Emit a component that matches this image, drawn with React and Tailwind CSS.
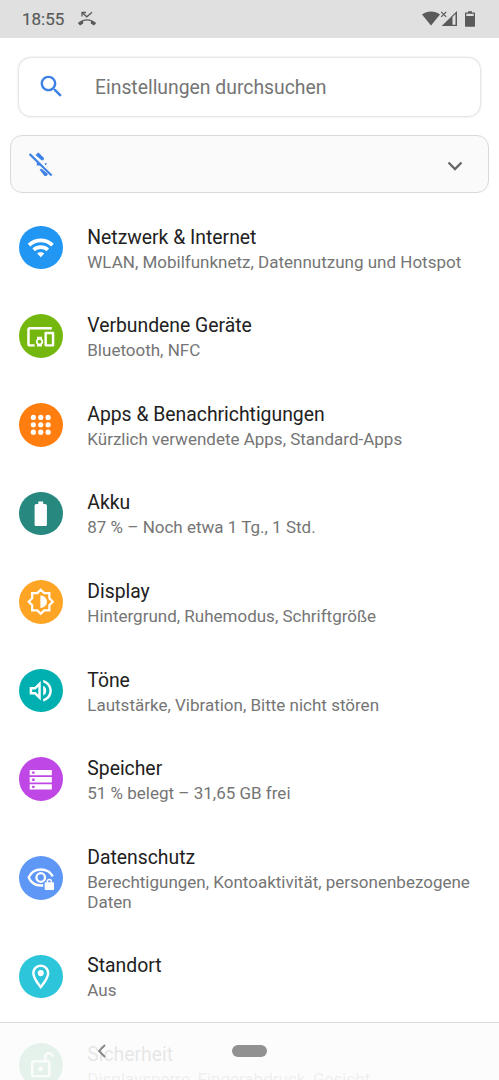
const ICONS = {
  wifi: (
    <path d="M1.4 8.800l2.100 2.200c4.700-4.700 12.300-4.700 17 0l2.100-2.200C16.700 3.100 7.300 3.100 1.400 8.800zM9.100 16.700l2.900 3L14.900 16.700c-1.600-1.500-4.200-1.500-5.800 0zM5.200 12.700l2.100 2.200c2.600-2.500 6.800-2.500 9.400 0l2.100-2.200c-3.700-3.600-9.900-3.600-13.600 0z" />
  ),
  devices: (
    <path d="M3 6h18V4H3c-1.100 0-2 .9-2 2v12c0 1.100.9 2 2 2h4v-2H3V6zm10 6H9v1.780c-.61.55-1 1.330-1 2.220s.39 1.670 1 2.220V20h4v-1.780c.61-.55 1-1.340 1-2.220s-.39-1.670-1-2.220V12zm-2 5.500c-.83 0-1.500-.67-1.500-1.500s.67-1.500 1.500-1.500 1.500.67 1.500 1.500-.67 1.500-1.500 1.500zM22 8h-6c-.5 0-1 .5-1 1v10c0 .5.5 1 1 1h6c.5 0 1-.5 1-1V9c0-.5-.5-1-1-1zm-1 10h-4v-8h4v8z" />
  ),
  apps: (
    <>
      {[6, 12, 18].map((y) =>
        [6, 12, 18].map((x) => <circle key={x + "-" + y} cx={x} cy={y} r="2.1" />)
      )}
    </>
  ),
  battery: (
    <path d="M15.670 4H14V2h-4v2H8.330C7.600 4 7 4.600 7 5.330v15.330C7 21.400 7.600 22 8.330 22h7.330c.74 0 1.340-.6 1.340-1.330V5.330C17 4.600 16.400 4 15.670 4z" />
  ),
  display: (
    <>
      <path
        d="M12 2.200L14.800 5H19v4.200L21.800 12 19 14.800V19h-4.200L12 21.800 9.200 19H5v-4.200L2.200 12 5 9.200V5h4.200z"
        fill="none"
        stroke="currentColor"
        strokeWidth="1.800"
      />
      <path d="M11.700 7v10c3 0 5.300-2.240 5.300-5s-2.300-5-5.300-5z" />
    </>
  ),
  sound: (
    <path d="M3 9v6h4l5 5V4L7 9H3zm7-.17v6.340L7.830 13H5v-2h2.830L10 8.830zM16.500 12c0-1.770-1.020-3.290-2.500-4.030v8.050c1.480-.73 2.500-2.250 2.500-4.020zM14 3.230v2.060c2.890.86 5 3.540 5 6.710s-2.110 5.850-5 6.710v2.060c4.010-.91 7-4.490 7-8.770s-2.990-7.860-7-8.770z" />
  ),
  storage: (
    <path
      fillRule="evenodd"
      d="M3 4h18v4.400H3zM3 9.800h18v4.400H3zM3 15.600h18V20H3zM5 5.200v2h2v-2zM5 11v2h2v-2zM5 16.800v2h2v-2z"
    />
  ),
  privacy: (
    <>
      <path
        d="M21.800 10.900C20 7.500 16.300 5.300 12 5.300S4 7.800 2.200 11.800C4 15.800 7.700 18.300 12 18.300c.7 0 1.400-.1 2-.2"
        fill="none"
        stroke="currentColor"
        strokeWidth="1.900"
      />
      <circle cx="12" cy="11.800" r="3.500" fill="none" stroke="currentColor" strokeWidth="1.900" />
      <path
        fillRule="evenodd"
        d="M21.200 16v-.7a2.200 2.200 0 0 0-4.400 0v.7h-.8c-.4 0-.8.4-.8.800v4.600c0 .4.400.8.8.8h6c.4 0 .8-.4.800-.8v-4.600c0-.4-.4-.8-.8-.8zm-1.200 0h-2v-.7a1 1 0 0 1 2 0z"
        transform="translate(0 -.3)"
      />
    </>
  ),
  location: (
    <>
      <path d="M12 2C8.130 2 5 5.130 5 9c0 5.250 7 13 7 13s7-7.750 7-13c0-3.870-3.130-7-7-7zM7 9c0-2.760 2.240-5 5-5s5 2.240 5 5c0 2.880-2.880 7.190-5 9.880C9.920 16.210 7 11.850 7 9z" />
      <circle cx="12" cy="9" r="2.500" />
    </>
  ),
  security: (
    <>
      <rect x="5" y="9.300" width="14" height="12" rx="1" fill="none" stroke="currentColor" strokeWidth="1.900" />
      <path d="M15.700 9V5.600a3 3 0 0 1 6 0" fill="none" stroke="currentColor" strokeWidth="1.900" />
      <circle cx="12" cy="15.300" r="1.900" />
    </>
  ),
};

const ITEMS = [
  { icon: "wifi", color: "bg-[#2196f3]", title: "Netzwerk & Internet", lines: ["WLAN, Mobilfunknetz, Datennutzung und Hotspot"] },
  { icon: "devices", color: "bg-[#74b80f]", title: "Verbundene Geräte", lines: ["Bluetooth, NFC"] },
  { icon: "apps", color: "bg-[#ff7e0f]", title: "Apps & Benachrichtigungen", lines: ["Kürzlich verwendete Apps, Standard-Apps"] },
  { icon: "battery", color: "bg-[#26887f]", title: "Akku", lines: ["87 % – Noch etwa 1 Tg., 1 Std."] },
  { icon: "display", color: "bg-[#ffa526]", title: "Display", lines: ["Hintergrund, Ruhemodus, Schriftgröße"] },
  { icon: "sound", color: "bg-[#00b0b0]", title: "Töne", lines: ["Lautstärke, Vibration, Bitte nicht stören"] },
  { icon: "storage", color: "bg-[#bf47e6]", title: "Speicher", lines: ["51 % belegt – 31,65 GB frei"] },
  { icon: "privacy", color: "bg-[#5e97f6]", title: "Datenschutz", lines: ["Berechtigungen, Kontoaktivität, personenbezogene", "Daten"] },
  { icon: "location", color: "bg-[#2cc5da]", title: "Standort", lines: ["Aus"] },
  { icon: "security", color: "bg-[#0f9d58]", title: "Sicherheit", lines: ["Displaysperre, Fingerabdruck, Gesicht"] },
];

function Item({ icon, color, title, lines }) {
  return (
    <li className="flex shrink-0 items-center py-[20.3px] pl-[19.200px]">
      <span className={`flex size-[43.600px] shrink-0 items-center justify-center rounded-full text-white ${color}`}>
        <svg viewBox="0 0 24 24" className="size-[29.500px]" fill="currentColor">
          {ICONS[icon]}
        </svg>
      </span>
      <div className="ml-[24.500px] whitespace-nowrap">
        <h2 className="text-[19.350px] leading-7 text-[#212121]">{title}</h2>
        {lines.map((line) => (
          <p key={line} className="text-[17px] leading-5 text-[#757575]">{line}</p>
        ))}
      </div>
    </li>
  );
}

function StatusBar() {
  return (
    <header className="flex h-[38px] shrink-0 items-center bg-[#e0e0e0] pl-[22px] pr-[23px] text-[#5a5a5a]">
      <span className="w-[43px] pt-0.5 text-[17px] [-webkit-text-stroke:0.200px_#5a5a5a]">18:55</span>
      <svg viewBox="0 0 20 16" className="ml-3 h-4 w-5" fill="none" stroke="currentColor">
        <path d="M5 5.500V1.500h4M5 1.500l4.800 4.300L15 1.200" strokeWidth="1.300" />
        <path d="M.8 12.100C6 6.900 14 6.900 19.200 12.100l-2.200 2.300-3.200-1.900V9.900C11.500 9.200 8.500 9.200 6.200 9.900v2.600l-3.200 1.900z" fill="currentColor" stroke="none" />
      </svg>
      <svg viewBox="0 0 54 18" className="ml-auto h-[18px] w-[54px]" fill="currentColor">
        <path d="M0 4.500C5 .4 13 .4 18 4.500L9 15.500z" />
        <path d="M19.200 1.800l5 5m0-5l-5 5" stroke="currentColor" strokeWidth="1.200" />
        <path fillRule="evenodd" d="M19.700 16L35 1v15zM30.500 7v7.700h3V4z" />
        <path fillRule="evenodd" d="M46 1.200h4v1.300h2.300c.4 0 .7.3.7.700v12.900c0 .4-.3.700-.7.700h-8.600c-.4 0-.7-.3-.7-.7V3.200c0-.4.300-.7.700-.7H46zM44.300 3.800V6h7.400V3.800z" />
      </svg>
    </header>
  );
}

export default function App() {
  return (
    <div className="relative flex h-[1080px] w-[499px] flex-col overflow-hidden bg-white font-['Roboto',sans-serif]">
      <StatusBar />
      <div className="mx-[19px] mt-5 flex h-[58px] shrink-0 items-center rounded-xl bg-white shadow-[0_0_3px_rgba(0,0,0,0.28)]">
        <svg viewBox="0 0 24 24" className="mb-px ml-[17.500px] size-[29px] text-[#3f82e6]" fill="currentColor">
          <path d="M15.500 14h-.79l-.28-.27C15.410 12.590 16 11.110 16 9.500 16 5.910 13.090 3 9.500 3S3 5.910 3 9.500 5.910 16 9.500 16c1.610 0 3.090-.59 4.230-1.570l.27.28v.79l5 4.990L20.490 19l-4.990-5zm-6 0C7.010 14 5 11.990 5 9.500S7.010 5 9.500 5 14 7.010 14 9.500 11.990 14 9.500 14z" />
        </svg>
        <span className="ml-[29.500px] pt-0.5 text-[19.350px] text-[#757575]">Einstellungen durchsuchen</span>
      </div>
      <div className="mx-2.5 mt-[19px] flex h-[58px] shrink-0 items-center justify-between rounded-xl border-[1.500px] border-[#dadada] bg-[#fafafa] pl-[18px] pr-[25px]">
        <svg viewBox="0 0 26 26" className="mt-0.5 size-[26px]" fill="#3f82e6">
          <path d="M.6 2l22 21.500" stroke="#3f82e6" strokeWidth="2.200" />
          <path d="M6.500 3L9.500.6 15 5.900 14.600 8.200H12.500zM7.800 9v4.500h4.500zM15.600 12l1.300-1.200 1 1-1.100 1.400zM10.500 17.500l2-.8 6.500 5.200-1.500 2.200h-2z" />
        </svg>
        <svg viewBox="0 0 16 10" className="mt-1 h-2.500 w-4" fill="none" stroke="#666" strokeWidth="2.300">
          <path d="M1.500 1.500L8 8l6.500-6.500" />
        </svg>
      </div>
      <ul className="mt-[10.400px] flex min-h-0 flex-col">
        {ITEMS.map((item) => (
          <Item key={item.title} {...item} />
        ))}
      </ul>
      <nav className="absolute inset-x-0 bottom-0 h-[58px] border-t border-[#dcdcdc] bg-[#fcfcfc]/90">
        <div className="flex h-[56px] items-center pl-[97px]">
          <svg viewBox="0 0 9 14" className="h-3.5 w-[9px]" fill="none" stroke="#858585" strokeWidth="1.800">
            <path d="M8 1L2 7l6 6" />
          </svg>
          <span className="ml-[126px] h-[12.500px] w-[35px] rounded-full bg-[#919191]" />
        </div>
      </nav>
    </div>
  );
}
